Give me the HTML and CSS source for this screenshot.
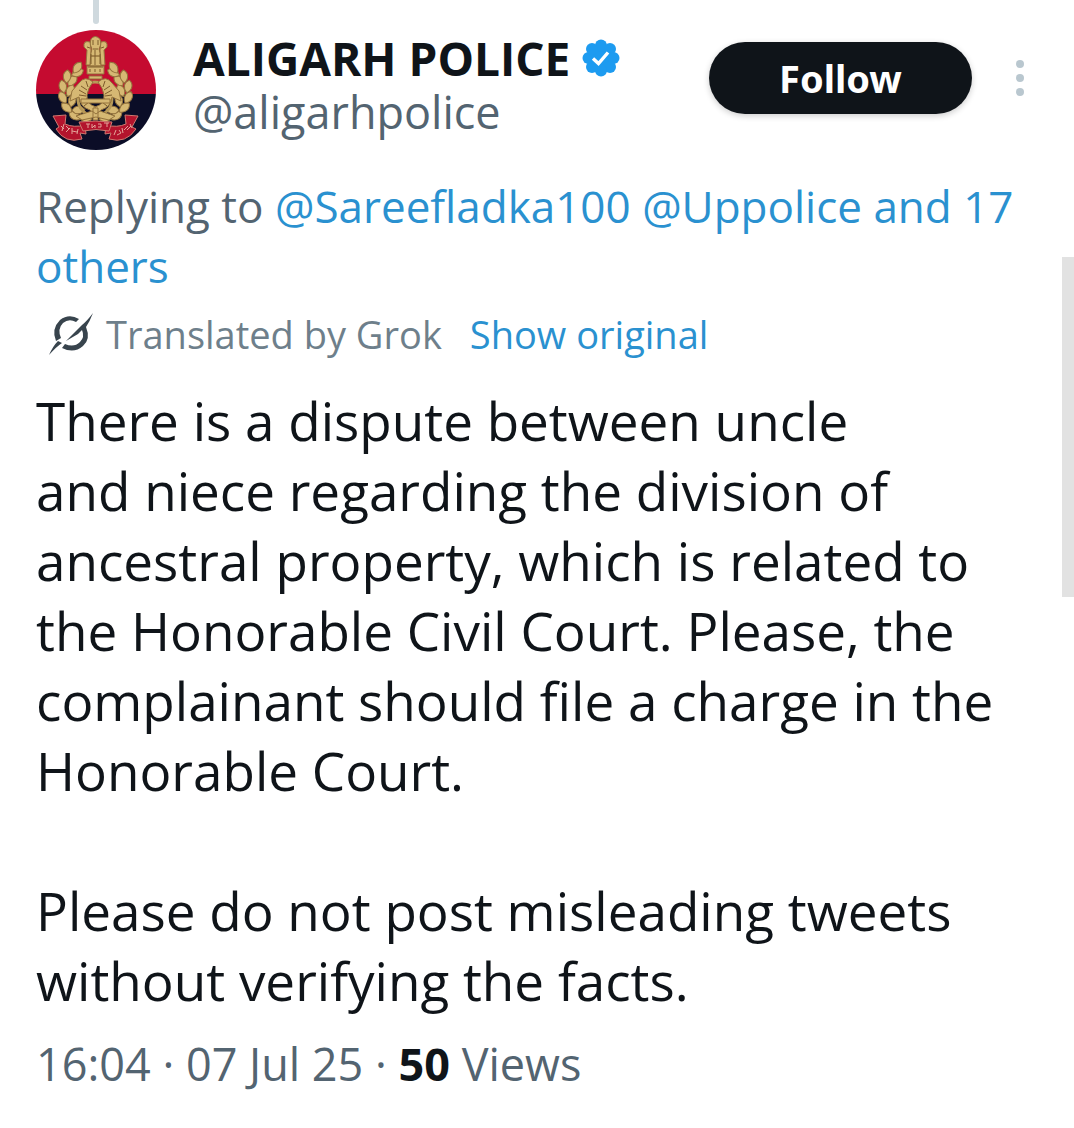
FILE: index.html
```html
<!DOCTYPE html>
<html lang="en">
<head>
<meta charset="utf-8">
<meta name="viewport" content="width=device-width, initial-scale=1">
<title>Aligarh Police on X</title>
<link rel="stylesheet" href="styles.css">
</head>
<body>
<article class="post">
  <div class="thread-line"></div>
  <header class="header">
    <svg class="avatar" viewBox="0 0 120 120" role="img" aria-label="Police emblem">
      <defs>
        <clipPath id="disc"><circle cx="60" cy="60" r="60"/></clipPath>
        <path id="leaf" d="M0-7C5-4 5 2 0 6C-5 2-5-4 0-7Z"/>
        <g id="branch">
          <use href="#leaf" transform="translate(50 88) rotate(-76)"/>
          <use href="#leaf" transform="translate(39 86) rotate(-55)"/>
          <use href="#leaf" transform="translate(43 80) rotate(-95)"/>
          <use href="#leaf" transform="translate(31 78) rotate(-48)"/>
          <use href="#leaf" transform="translate(36 71) rotate(12)"/>
          <use href="#leaf" transform="translate(27 68) rotate(-28)"/>
          <use href="#leaf" transform="translate(34 61) rotate(25)"/>
          <use href="#leaf" transform="translate(27 57) rotate(-12)"/>
          <use href="#leaf" transform="translate(36 51) rotate(40)"/>
          <use href="#leaf" transform="translate(31 47) rotate(5)"/>
          <use href="#leaf" transform="translate(41 43) rotate(65)"/>
          <use href="#leaf" transform="translate(41 38) rotate(35)"/>
        </g>
        <g id="fish">
          <path d="M57 52Q49 45 43 53L36 61L34 71L43 67Q44 77 54 80L59 86L60 77Q50 74 51 65Q52 58 57 52Z"/>
          <path class="engrave" d="M45 56l6 4M43 60l7 4M43 65l7 1M45 71l6-2M48 76l5-4M50 51l2 6"/>
        </g>
      </defs>
      <g clip-path="url(#disc)">
        <rect width="120" height="64" fill="#c50b30"/>
        <rect y="64" width="120" height="56" fill="#0b0d27"/>
        <g class="gold">
          <use href="#branch"/>
          <use href="#branch" transform="matrix(-1 0 0 1 119 0)"/>
          <circle cx="59" cy="69" r="17" fill="none" stroke="#b89a58" stroke-width="3"/>
          <use href="#fish"/>
          <use href="#fish" transform="matrix(-1 0 0 1 119 0)"/>
          <path d="M45 69H74V73H45ZM57 78h5v12h-5ZM40 86L56 81L60 84L64 81L79 86L73 90L60 87L46 90Z"/>
          <path d="M51 36h17v8H51ZM54 26h11v10H54ZM55 9q4-5 9 0l1 5-2 5 2 7H54l2-7-2-5Z"/>
          <path d="M54 12q-7-2-6 5l3 3-1 15h4l1-15ZM65 12q7-2 6 5l-3 3 1 15h-4l-1-15ZM53 46h13v3H53Z"/>
          <path class="engrave" d="M57 10v5M62 10v5M57 19h5M59 20v15M55 24v10M64 24v10M52 37h15M54 39v3M59 39v3M64 39v3M51 17l3 1M68 17l-3 1"/>
        </g>
        <g class="ribbon">
          <path d="M17 86L30 85L29 94Q38 98 49 95L50 104L44 103L46 109Q29 114 20 99L23 97Z"/>
          <path d="M102 86L89 85L90 94Q81 98 70 95L69 104L75 103L73 109Q90 114 100 99L96 97Z"/>
          <path d="M43 92Q59 90 76 92L73 101Q60 98 47 101Z"/>
          <path class="motto" d="M25 96l3 3m0-5l-2 7m4-5l3 3m-3 3l4-4m2 0v6m0-3l5 1m1-3l-1 5M50 94h4m-2 0v4m4-4v4l3-3v3m3-4h3v3h-3m6-4h5m-2 0v4M78 105l2-5m1 5l4-2-2-3m4 3l-1-5m2 2l4-4m-1 4l4-4m-1-2l2 4"/>
        </g>
      </g>
    </svg>
    <div class="names">
      <div class="name-row">
        <h1 class="name">ALIGARH POLICE</h1>
        <svg class="verified" viewBox="0 0 38 38" role="img" aria-label="Verified account">
          <g fill="#1d9bf0"><circle cx="19" cy="19" r="14"/><circle cx="19" cy="6.500" r="6"/><circle cx="28" cy="10" r="6"/><circle cx="31.500" cy="19" r="6"/><circle cx="28" cy="28" r="6"/><circle cx="19" cy="31.500" r="6"/><circle cx="10" cy="28" r="6"/><circle cx="6.500" cy="19" r="6"/><circle cx="10" cy="10" r="6"/></g>
          <path d="M11 19.500L16.500 24.500L26 13.500" fill="none" stroke="#fff" stroke-width="3.400"/>
        </svg>
      </div>
      <a class="handle" href="#">@aligarhpolice</a>
    </div>
    <button class="follow" type="button">Follow</button>
    <button class="more" type="button" aria-label="More">
      <svg viewBox="0 0 8 36"><circle cx="4" cy="4" r="4"/><circle cx="4" cy="18" r="4"/><circle cx="4" cy="32" r="4"/></svg>
    </button>
  </header>
  <p class="replying">Replying to <a href="#">@Sareefladka100</a> <a href="#">@Uppolice</a> <a href="#">and 17<br>others</a></p>
  <div class="translation">
    <svg class="grok" viewBox="0 0 46 44" aria-hidden="true">
      <path d="M31 7Q21 1 12 8Q3 17 8 29L13 26Q9 17 15 11Q21 6 28 10Z"/>
      <path d="M1 43Q5 34 10 29L14 31Q8 35 1 43Z"/>
      <path d="M18 29L34 13Q39 9 45 1Q42 9 38 15Q43 27 35 34Q26 42 14 36L17 32Q26 36 32 30Q37 25 34 18L30 22Z"/>
    </svg>
    <span>Translated by Grok</span>
    <a class="original" href="#">Show original</a>
  </div>
  <div class="body">
    <p>There is a dispute between uncle<br>and niece regarding the division of<br>ancestral property, which is related to<br>the Honorable Civil Court. Please, the<br>complainant should file a charge in the<br>Honorable Court.</p>
    <p>Please do not post misleading tweets<br>without verifying the facts.</p>
  </div>
  <footer class="meta"><time datetime="2025-07-07T16:04">16:04 · 07 Jul 25</time> · <strong>50</strong> Views</footer>
</article>
<div class="scroll-thumb"></div>
</body>
</html>
```
FILE: styles.css
```css
* { box-sizing: border-box; }
body {
  margin: 0;
  background: #fff;
  color: #0f1419;
  font-family: "Open Sans", "Noto Sans", sans-serif;
}
h1, p { margin: 0; }
a { color: #2a91d0; text-decoration: none; }
.post { padding: 0 38px 32px 36px; }
.thread-line {
  width: 6px;
  height: 24px;
  margin: 0 0 6px 57px;
  background: #cfd9de;
  border-radius: 0 0 3px 3px;
}
.header { display: flex; align-items: flex-start; }
.avatar { width: 120px; height: 120px; flex: none; }
.gold { fill: #d6b873; stroke: #94733d; stroke-width: 1; }
.engrave { fill: none; stroke: #7d5c2c; stroke-width: 1; }
.ribbon { fill: #b3142d; stroke: #cf7970; stroke-width: 1; }
.motto { fill: none; stroke: #e4a59a; stroke-width: 1; }
.names { flex: 1; min-width: 0; margin-left: 37px; }
.name-row { display: flex; align-items: center; gap: 12px; height: 56px; }
.name { font-size: 46px; line-height: 56px; font-weight: 700; white-space: nowrap; }
.verified { width: 38px; height: 38px; flex: none; }
.handle { display: block; color: #536471; font-size: 45px; line-height: 52px; }
.follow {
  width: 263px;
  height: 72px;
  margin-top: 12px;
  padding: 0;
  border: 0;
  border-radius: 36px;
  background: #0f1419;
  box-shadow: 0 2px 6px rgba(0, 0, 0, .2);
  color: #fff;
  font: 700 38px/72px "Noto Sans", sans-serif;
}
.more {
  display: flex;
  justify-content: center;
  width: 32px;
  margin: 30px 0 0 32px;
  padding: 0;
  border: 0;
  background: none;
}
.more svg { width: 8px; height: 36px; fill: #b9c7cf; }
.replying { margin-top: 26px; color: #536471; font-size: 44px; line-height: 60px; white-space: nowrap; }
.translation {
  display: flex;
  align-items: center;
  margin: 8px 0 0 12px;
  color: #6e7f8b;
  font-size: 38px;
  line-height: 60px;
  white-space: nowrap;
}
.grok { width: 46px; height: 44px; margin-right: 12px; fill: #38444d; }
.original { margin-left: 28px; }
.body { margin-top: 22px; font-size: 53px; line-height: 70px; white-space: nowrap; }
.body p + p { margin-top: 70px; }
.meta { margin-top: 18px; color: #536471; font-size: 45px; line-height: 60px; }
.meta strong { color: #0f1419; }
.scroll-thumb { position: absolute; top: 257px; right: 0; width: 12px; height: 340px; background: #e2e2e2; }
```
